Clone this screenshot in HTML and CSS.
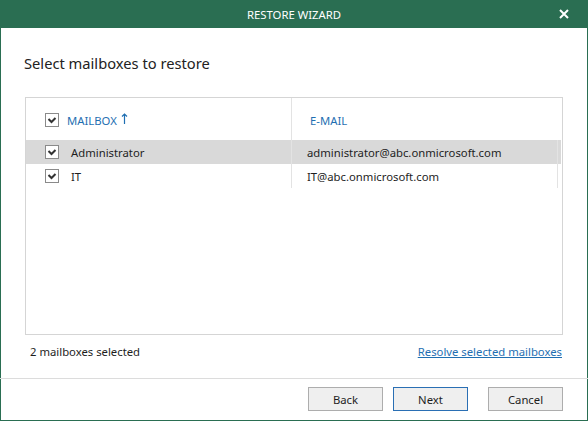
FILE: index.html
```html
<!DOCTYPE html>
<html lang="en">
<head>
  <meta charset="UTF-8" />
  <title>Restore Wizard</title>
  <link rel="stylesheet" href="styles.css">
</head>
<body>

  <div class="window">
    <div class="titlebar">
      <span class="title">RESTORE WIZARD</span>
      <svg class="close" width="10" height="10" viewBox="0 0 10 10">
        <path d="M1 1 L9 9 M9 1 L1 9" stroke="#fff" stroke-width="2" />
      </svg>
    </div>

    <div class="content">
      <div class="heading">Select mailboxes to restore</div>

      <div class="panel">
        <div class="grid-head">
          <div class="col col-name">
            <span class="check">
              <svg width="14" height="14" viewBox="0 0 14 14"><path d="M3.5 6 L6.5 9 L10.5 5" fill="none" stroke="#333" stroke-width="2" /></svg>
            </span>
            <span class="head-text">MAILBOX</span>
            <svg class="sort" width="7" height="11" viewBox="0 0 7 11"><path d="M3.5 1 V11 M1 3.5 L3.5 1 L6 3.5" fill="none" stroke="#1f6fb2" stroke-width="1.2" /></svg>
          </div>
          <div class="col col-mail"><span class="head-text">E-MAIL</span></div>
        </div>

        <div class="row selected">
          <div class="col col-name">
            <span class="check">
              <svg width="14" height="14" viewBox="0 0 14 14"><path d="M3.5 6 L6.5 9 L10.5 5" fill="none" stroke="#333" stroke-width="2" /></svg>
            </span>
            <span class="cell-text">Administrator</span>
          </div>
          <div class="col col-mail"><span class="cell-text">administrator@abc.onmicrosoft.com</span></div>
        </div>
        <div class="row">
          <div class="col col-name">
            <span class="check">
              <svg width="14" height="14" viewBox="0 0 14 14"><path d="M3.5 6 L6.5 9 L10.5 5" fill="none" stroke="#333" stroke-width="2" /></svg>
            </span>
            <span class="cell-text">IT</span>
          </div>
          <div class="col col-mail"><span class="cell-text">IT@abc.onmicrosoft.com</span></div>
        </div>
      </div>

      <div class="status">
        <span>2 mailboxes selected</span>
        <a href="#" class="link">Resolve selected mailboxes</a>
      </div>
    </div>

    <div class="footer">
      <button class="btn">Back</button>
      <button class="btn btn-default">Next</button>
      <button class="btn btn-cancel">Cancel</button>
    </div>
  </div>

</body>
</html>
```

FILE: styles.css
```css
* {
  box-sizing: border-box;
}
body {
  margin: 0;
  font-family: 'Noto Sans', 'Open Sans', sans-serif;
  font-size: 11.3px;
  color: #1e1e1e;
  background: #fff;
}
.window {
  width: 588px;
  height: 421px;
  border: 1px solid #2a6e52;
  border-top: none;
  display: flex;
  flex-direction: column;
}
.titlebar {
  height: 28px;
  margin: 0 -1px;
  background: #2a6e52;
  color: #fff;
  display: flex;
  align-items: center;
  justify-content: center;
  position: relative;
}
.title {
  font-size: 11.3px;
}
.close {
  position: absolute;
  right: 19px;
  top: 9px;
}
.content {
  flex: 1;
  padding: 0 24px;
  display: flex;
  flex-direction: column;
}
.heading {
  font-size: 14.7px;
  line-height: 20px;
  margin-top: 25px;
  margin-left: -1px;
  color: #222;
}
.panel {
  margin-top: 24px;
  height: 238px;
  border: 1px solid #d5d5d5;
}
.grid-head {
  display: flex;
  height: 42px;
}
.grid-head .col {
  padding-top: 2px;
}
.col {
  display: flex;
  align-items: center;
}
.col-name {
  width: 266px;
  padding-left: 19px;
  border-right: 1px solid #e3e3e3;
}
.col-mail {
  width: 266px;
  border-right: 1px solid transparent;
}
.grid-head .col-mail {
  padding-left: 18px;
}
.head-text {
  color: #1f6fb2;
}
.sort {
  margin-left: 4px;
  margin-top: -4px;
}
.check {
  width: 14px;
  height: 14px;
  border: 1px solid #8a8a8a;
  background: #fff;
  display: flex;
  align-items: center;
  justify-content: center;
  margin-right: 8px;
}
.check svg {
  flex: none;
}
.row {
  display: flex;
  height: 24px;
  width: 535px;
}
.row .col-mail {
  padding-left: 15px;
  border-right-color: #e3e3e3;
}
.row .col-name .check {
  margin-right: 12px;
}
.selected {
  background: #d9d9d9;
}
.status {
  display: flex;
  justify-content: space-between;
  padding: 9px 1px 0 5px;
  line-height: 16px;
  color: #1e1e1e;
}
.link {
  color: #1f6fb2;
  text-decoration: underline;
}
.footer {
  margin: 0 -1px;
  border-top: 1px solid #dcdcdc;
  padding: 8px 25px 9px 0;
  display: flex;
  justify-content: flex-end;
}
.btn {
  width: 75px;
  height: 24px;
  font-family: inherit;
  font-size: 11.3px;
  color: #1e1e1e;
  background: #efefef;
  border: 1px solid #adadad;
  margin-left: 10px;
}
.btn-default {
  border-color: #2a6fb4;
}
.btn-cancel {
  margin-left: 20px;
}
```
